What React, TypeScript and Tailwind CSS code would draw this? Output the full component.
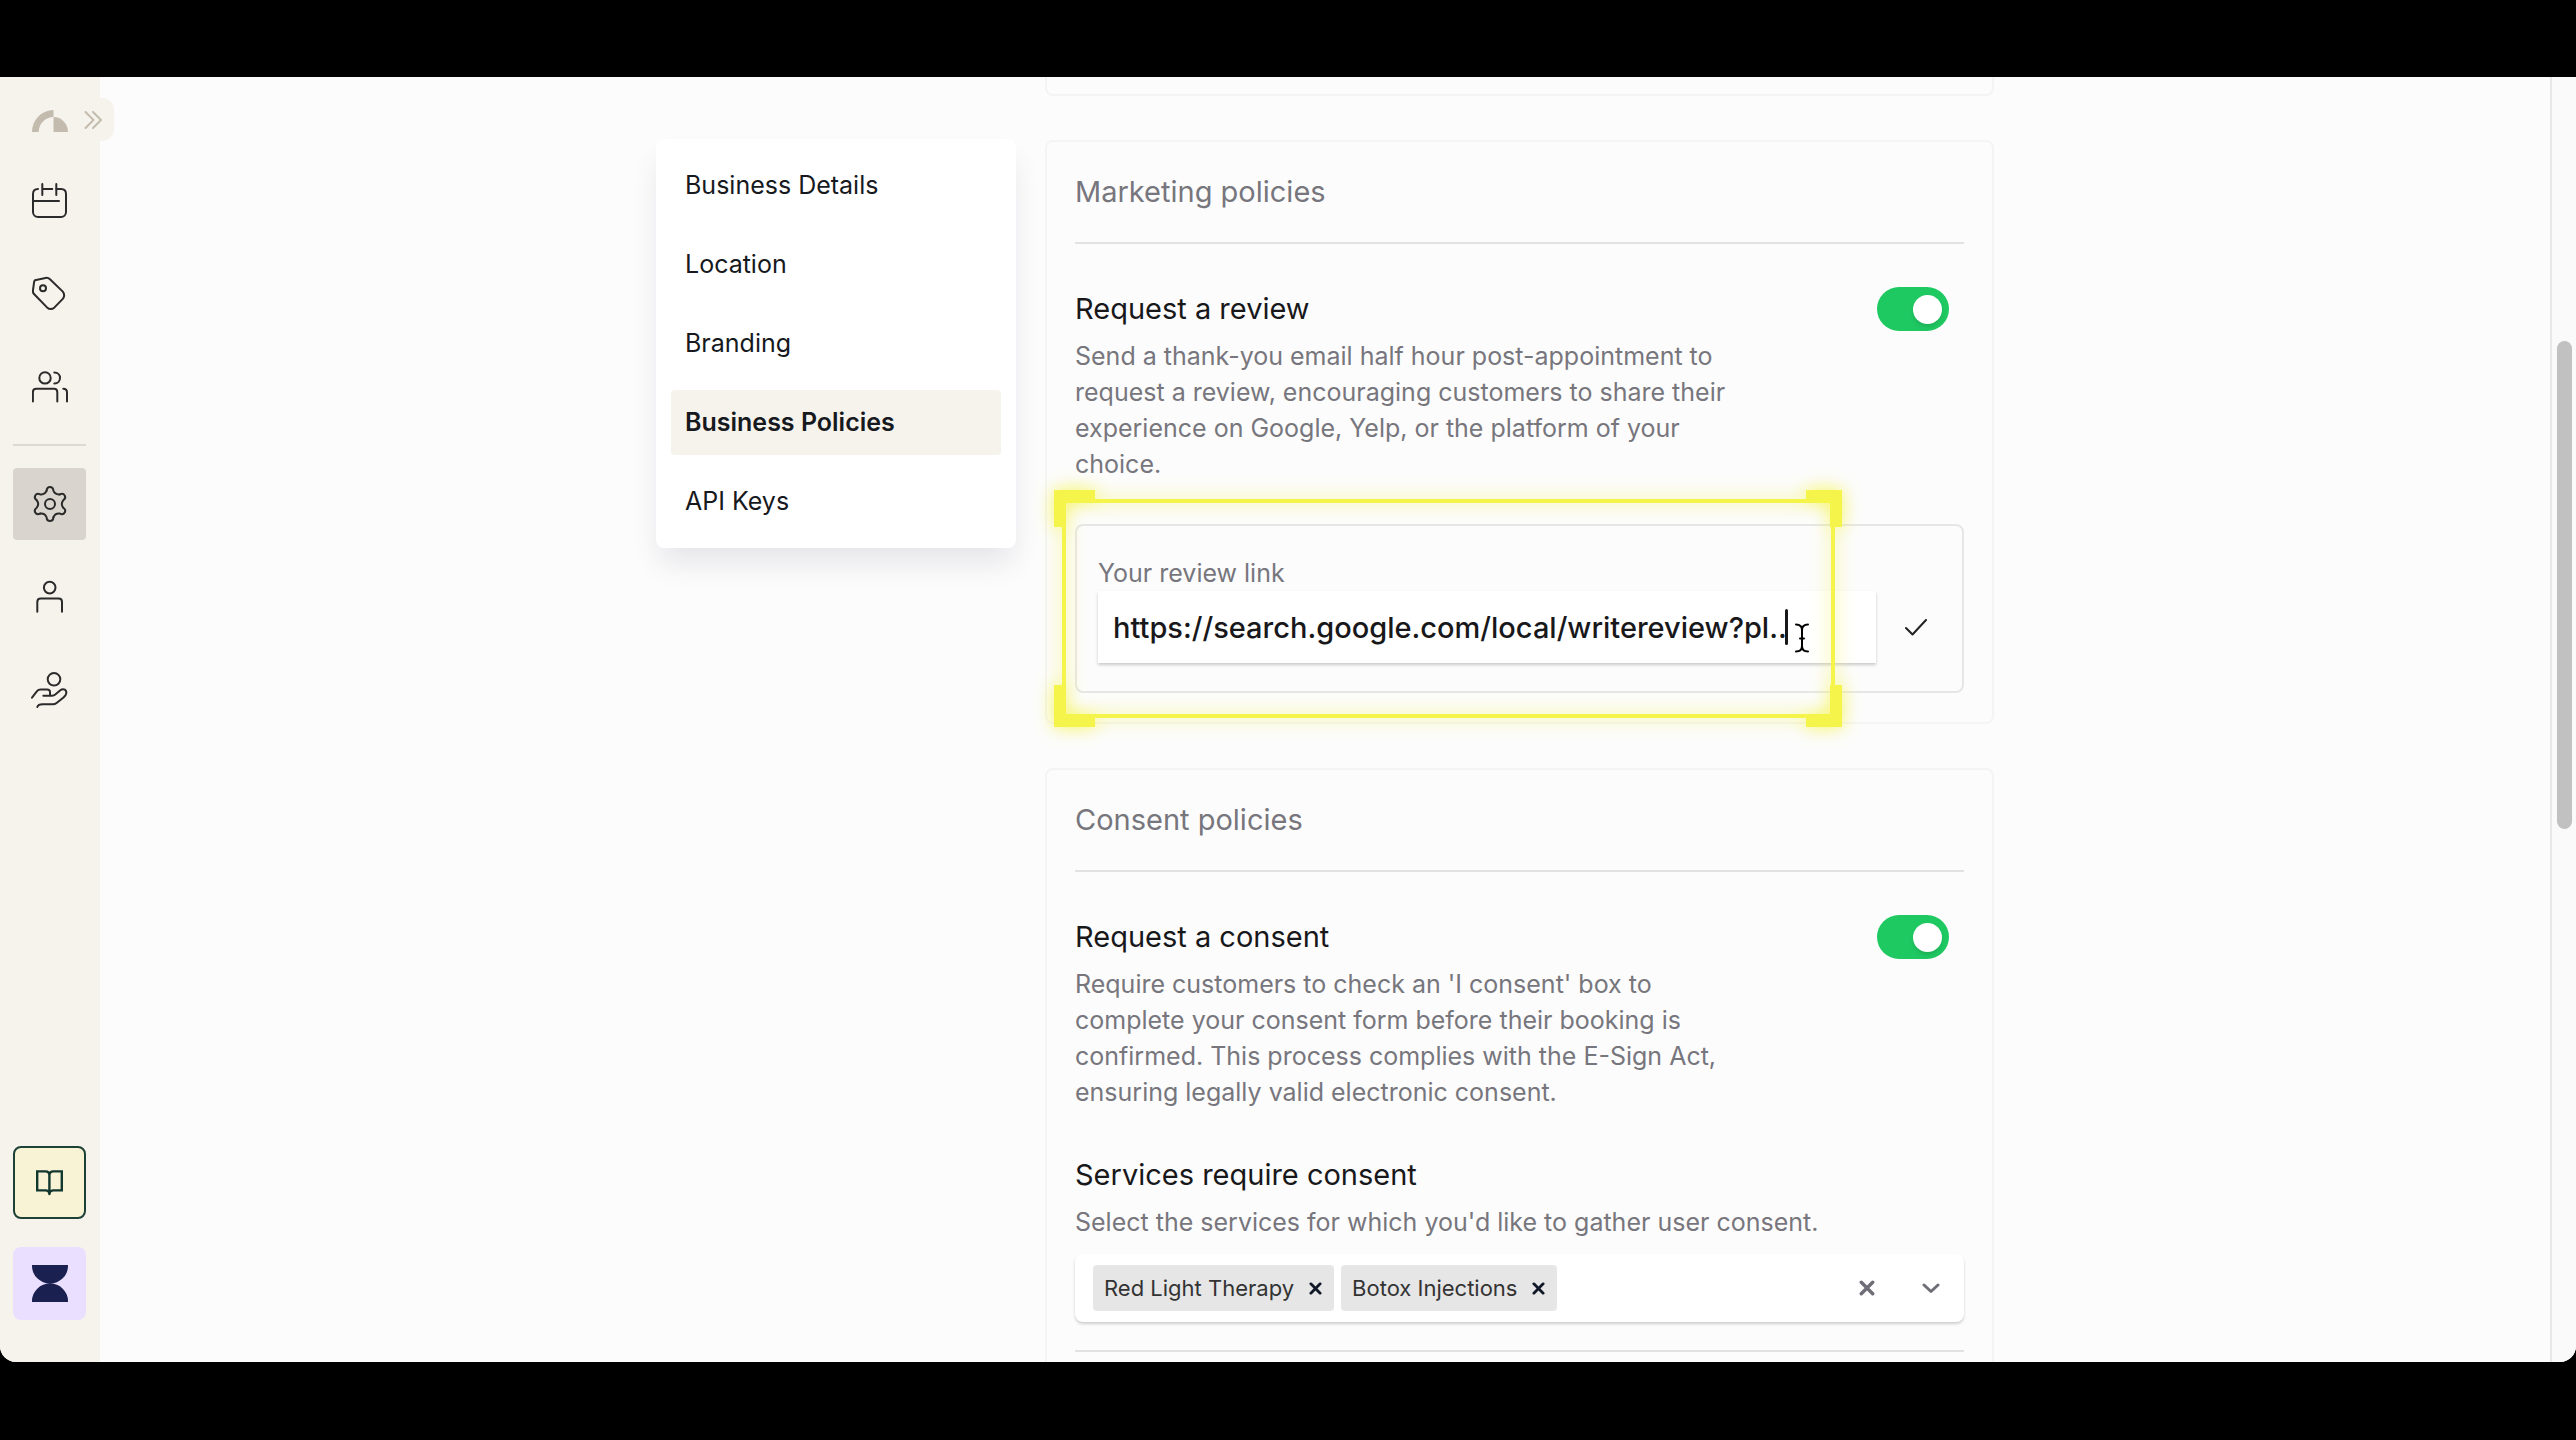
import React, { useState } from "react";
import clsx from "clsx";

const stroke = {
	fill: "none",
	stroke: "currentColor",
	strokeWidth: 2,
	strokeLinecap: "round" as const,
	strokeLinejoin: "round" as const,
}

const CalendarIcon = () => (
	<svg viewBox="0 0 36 36" className="size-9" {...stroke}>
		<path d="M6 6C3 6 1 8 1 11V29a5 5 0 0 0 5 5H29a5 5 0 0 0 5-5V11C34 8 32 6 29 6H24M10.3 1V12M10.3 6H20.3M24.3 1V12M1 18H27" />
	</svg>
)

const TagIcon = () => (
	<svg viewBox="0 0 36 36" className="size-9" {...stroke}>
		<path d="M2.9 4.2 13.5 1.9Q16.3 1.5 18 3.3L30.8 15.6Q33.4 19 31 22.6L22.5 31.4Q18.7 34.6 15 31.4L2 18Q.6 16.5 1 14L2.2 5.4Z" />
		<circle cx="11" cy="12.3" r="3" />
	</svg>
)

const UsersIcon = () => (
	<svg viewBox="0 0 36 32" className="h-8 w-9" {...stroke}>
		<circle cx="13" cy="6.9" r="5.7" />
		<path d="M22.3 1.5C26 1.5 28 4 28 6.9S26 12.5 22.3 12.5M.9 30.5V21.2Q.9 17.8 4.3 17.8H22Q25.3 17.8 25.3 21.2V30.5M31.3 17.8Q35 18 35 21.2V30.5" />
	</svg>
)

const GearIcon = () => (
	<svg viewBox="0 0 36 36" className="size-9" {...stroke}>
		{[0, 60, 120, 180, 240, 300].map(angle => (
			<path
				key={angle}
				d="M14.6 4.7C14.8 2.2 16 1 18 1C20 1 21.2 2.2 21.4 4.7Q23.2 9 27.8 8.4"
				transform={`rotate(${angle} 18 18)`}
			/>
		))}
		<circle cx="18" cy="18" r="5" />
	</svg>
)

const UserIcon = () => (
	<svg viewBox="0 0 36 34" className="h-[34px] w-9" {...stroke}>
		<circle cx="17.7" cy="7.6" r="5.8" />
		<path d="M5.3 31.7V22Q5.3 18.6 8.8 18.6H26.6Q30 18.6 30 22V31.7" />
	</svg>
)

const HandIcon = () => (
	<svg viewBox="0 0 38 36" className="h-9 w-[38px]" {...stroke}>
		<circle cx="23" cy="7.3" r="6.3" />
		<path d="M1 25.7 6 19.2Q7.4 17.4 9.6 17.4H16.2Q19 17.4 19 20V23.7M12.3 23.7H21Q23 23.7 24.3 22.6L29.3 18.3Q31.5 16.5 33.9 17.6 36.4 19.6 34.6 23 33.8 24.3 32.5 25.4L25.6 31Q24 32.3 21.7 32.3H11.5Q7.2 32.3 6.3 35" />
	</svg>
)

const BookIcon = () => (
	<svg viewBox="0 0 27 26" className="h-[26px] w-[27px]" {...stroke} strokeWidth={2.4} strokeLinejoin="miter">
		<path d="M13.4 5.3Q13.4 1.4 9.5 1.4H1.2V20.4H10Q13.4 20.6 13.4 24ZM13.4 5.3Q13.4 1.4 17.3 1.4H25.8V20.4H17Q13.4 20.6 13.4 24" />
	</svg>
)

const HourglassLogo = () => (
	<svg viewBox="0 0 36 37" className="h-[37px] w-9" fill="#1a2050">
		<path d="M0 0H36V1A18 17.5 0 0 1 0 1ZM0 37H36V36A18 17.5 0 0 0 0 36Z" />
	</svg>
)

const BrandLogo = () => (
	<svg viewBox="0 0 36 22" className="h-[22px] w-9" fill="#c3bbae">
		<path d="M0 22A21.5 22 0 0 1 21.5 0V7A15 15 0 0 0 6.7 22ZM21.5 7A14.5 15 0 0 1 36 22H21.5Z" />
	</svg>
)

const CrossIcon = ({ className }: { className: string }) => (
	<svg viewBox="0 0 14 14" className={className} {...stroke} strokeWidth={3}>
		<path d="M2 2 12 12M12 2 2 12" />
	</svg>
)

const menuItems = [
	{ label: "Calendar", icon: CalendarIcon },
	{ label: "Services", icon: TagIcon },
	{ label: "Customers", icon: UsersIcon },
]

const accountItems = [
	{ label: "Settings", icon: GearIcon, active: true },
	{ label: "Profile", icon: UserIcon },
	{ label: "Payments", icon: HandIcon },
]

const settingTabs = ["Business Details", "Location", "Branding", "Business Policies", "API Keys"]

function SidebarLink({ label, icon: Icon, active }: { label: string; icon: React.FC; active?: boolean }) {
	return (
		<a
			href="#"
			aria-label={label}
			className={clsx("flex h-[72px] items-center justify-center rounded text-[#2b2b2b]", active && "bg-[#d9d5ce]")}
		>
			<Icon />
		</a>
	)
}

function Sidebar() {
	return (
		<aside className="relative flex w-[100px] shrink-0 flex-col bg-[#f6f3ec] pr-[14px] pb-[42px] pl-[13px]">
			<div className="flex h-[88px] shrink-0 items-center justify-center">
				<BrandLogo />
			</div>
			<button
				aria-label="Expand menu"
				className="absolute top-[21px] left-[78px] flex h-[43px] w-9 items-center rounded-r-xl bg-[#f6f3ec] pl-[6px] text-[#c3bbae]"
			>
				<svg viewBox="0 0 18 18" className="size-[18px]" {...stroke}>
					<path d="M1.5 1 9.5 9 1.5 17M9 1 17 9 9 17" />
				</svg>
			</button>
			<nav className="flex flex-col gap-[21px]">
				{menuItems.map(item => <SidebarLink key={item.label} {...item} />)}
				<hr className="mb-px border-t-2 border-[#ddd9d1]" />
				{accountItems.map(item => <SidebarLink key={item.label} {...item} />)}
			</nav>
			<div className="mt-auto flex flex-col gap-7">
				<button aria-label="Guides" className="flex size-[73px] items-center justify-center rounded-lg border-2 border-[#1d4037] bg-[#f8f3d4] text-[#12372f]">
					<BookIcon />
				</button>
				<button aria-label="Workspace" className="flex size-[73px] items-center justify-center rounded-lg bg-[#ebdfff]">
					<HourglassLogo />
				</button>
			</div>
		</aside>
	)
}

function PolicyCard({ title, children }: { title: string; children: React.ReactNode }) {
	return (
		<section className="rounded-lg border-2 border-[#f4f4f4] px-7 pt-8 pb-[29px]">
			<h2 className="border-b-2 border-[#e2e2e2] pb-8 text-[29px] leading-9 text-[#77767d]">{title}</h2>
			{children}
		</section>
	)
}

function PolicySwitch({ id, title, text }: { id: string; title: string; text: string }) {
	const [enabled, setEnabled] = useState<boolean>(true)

	return (
		<div className="mt-[43px]">
			<div className="flex h-11 items-center justify-between pr-[15px]">
				<label htmlFor={id} className="text-[29px] leading-9 text-[#18181b]">{title}</label>
				<input
					id={id}
					type="checkbox"
					role="switch"
					checked={enabled}
					onChange={() => setEnabled(!enabled)}
					className="flex h-11 w-[72px] appearance-none items-center rounded-full bg-gray-300 px-[7px] before:size-[29px] before:rounded-full before:bg-white before:shadow-md before:content-[''] checked:justify-end checked:bg-[#1fc962]"
				/>
			</div>
			<p className="mt-[7px] max-w-[668px] text-[25px] leading-9 text-[#77767d]">{text}</p>
		</div>
	)
}

function HighlightFrame() {
	return (
		<div className="pointer-events-none absolute -top-[27px] -left-[15px] h-[219px] w-[773px] border-4 border-[#f5f44b] drop-shadow-[0_0_9px_#f5f44b]">
			<span className="absolute -top-[13px] -left-3 h-[37px] w-[41px] border-t-[13px] border-l-[12px] border-[#f5f44b]" />
			<span className="absolute -top-[13px] -right-[11px] h-[37px] w-9 border-t-[13px] border-r-[12px] border-[#f5f44b]" />
			<span className="absolute -bottom-[13px] -left-3 h-[42px] w-[41px] border-b-[13px] border-l-[12px] border-[#f5f44b]" />
			<span className="absolute -right-[11px] -bottom-[13px] h-[42px] w-9 border-r-[12px] border-b-[13px] border-[#f5f44b]" />
		</div>
	)
}

function ReviewLink() {
	const [link, setLink] = useState<string>("https://search.google.com/local/writereview?pl..")

	return (
		<div className="relative mt-[42px] rounded-lg border-2 border-[#e6e6e6] pt-[29px] pb-7 pl-[21px]">
			<label htmlFor="review-link" className="block text-[25px] leading-9 text-[#77767d]">Your review link</label>
			<div className="flex">
				<div className="relative flex-1">
					<input
						id="review-link"
						value={link}
						onChange={e => setLink(e.target.value)}
						className="h-[72px] w-full bg-white px-[15px] text-[29px] font-medium text-[#18181b] shadow-[0_2px_3px_rgba(0,0,0,0.2)] outline-none"
					/>
					{/* Text caret and mouse pointer */}
					<span className="absolute top-[18px] left-[687px] h-9 w-[3px] rounded-full bg-[#18181b]" />
					<svg viewBox="0 0 14 30" className="absolute top-8 left-[697px] h-[30px] w-3.5 text-black" {...stroke}>
						<path d="M1 1.5Q7 1.5 7 7 7 1.5 13 1.5M7 6V24M1 28.5Q7 28.5 7 23 7 28.5 13 28.5M5 15.5H9" />
					</svg>
				</div>
				<button aria-label="Save review link" className="mr-1.5 flex w-20 items-center justify-center text-[#222]">
					<svg viewBox="0 0 22 17" className="h-[17px] w-[22px]" {...stroke}>
						<path d="M1 9 7.5 15.5 21 1" />
					</svg>
				</button>
			</div>
			<HighlightFrame />
		</div>
	)
}

function ServiceSelect() {
	const [services, setServices] = useState<string[]>(["Red Light Therapy", "Botox Injections"])

	return (
		<div className="mt-3.5 flex h-[68px] items-center gap-[7px] rounded-lg bg-white pr-3.5 pl-[18px] shadow-[0_2px_3px_rgba(0,0,0,0.18)]">
			{services.map(service => (
				<span key={service} className="flex h-[46px] items-center rounded bg-[#e6e6e6] pl-[11px] text-[22px] text-[#333]">
					{service}
					<button
						aria-label={`Remove ${service}`}
						onClick={() => setServices(services.filter(s => s !== service))}
						className="flex h-full items-center pr-3 pl-[15px] text-[#111827]"
					>
						<CrossIcon className="size-[13px]" />
					</button>
				</span>
			))}
			<input id="services" aria-label="Services" className="h-full min-w-0 flex-1 outline-none" />
			<button aria-label="Clear services" onClick={() => setServices([])} className="px-3 text-[#6f6e77]">
				<CrossIcon className="size-4" />
			</button>
			<button aria-label="Show services" className="pr-2.5 pl-7 text-[#6f6e77]">
				<svg viewBox="0 0 18 11" className="h-[11px] w-[18px]" {...stroke} strokeWidth={3}>
					<path d="M2 2 9 8.5 16 2" />
				</svg>
			</button>
		</div>
	)
}

export default function BusinessPoliciesPage() {
	const [tab, setTab] = useState<string>("Business Policies")

	return (
		<div className="h-screen bg-black pt-[77px] pb-[78px] font-['Inter',sans-serif]">
			<div className="flex h-full overflow-hidden rounded-b-2xl bg-[#fcfcfc]">
				<Sidebar />

				<main className="min-w-0 flex-1 overflow-hidden">
					<div className="mx-auto flex max-w-[1338px] items-start gap-[29px]">
						<nav className="mt-[62px] flex w-[360px] shrink-0 flex-col gap-3.5 rounded-lg bg-white px-[15px] py-3.5 shadow-[0_18px_30px_-4px_rgba(20,20,60,0.10)]">
							{settingTabs.map(label => (
								<button
									key={label}
									onClick={() => setTab(label)}
									className={clsx(
										"h-[65px] rounded-sm px-3.5 text-left text-[25px] text-[#16191d]",
										tab === label && "bg-[#f6f3ec] font-semibold"
									)}
								>
									{label}
								</button>
							))}
						</nav>

						<div className="flex min-w-0 flex-1 flex-col gap-11">
							<section className="h-[19px] rounded-b-lg border-2 border-t-0 border-[#f4f4f4]" />

							<PolicyCard title="Marketing policies">
								<PolicySwitch
									id="request-review"
									title="Request a review"
									text="Send a thank-you email half hour post-appointment to request a review, encouraging customers to share their experience on Google, Yelp, or the platform of your choice."
								/>
								<ReviewLink />
							</PolicyCard>

							<PolicyCard title="Consent policies">
								<PolicySwitch
									id="request-consent"
									title="Request a consent"
									text="Require customers to check an 'I consent' box to complete your consent form before their booking is confirmed. This process complies with the E-Sign Act, ensuring legally valid electronic consent."
								/>
								<div className="mt-[43px]">
									<label htmlFor="services" className="flex h-11 items-center text-[29px] leading-9 text-[#18181b]">Services require consent</label>
									<p className="mt-[7px] text-[25px] leading-9 text-[#77767d]">Select the services for which you'd like to gather user consent.</p>
									<ServiceSelect />
								</div>
								<hr className="mt-7 mb-20 border-t-2 border-[#e2e2e2]" />
							</PolicyCard>
						</div>
					</div>
				</main>

				{/* Scroll track */}
				<div className="w-[26px] shrink-0 border-l-2 border-[#e8e8e8] bg-[#fafafa] pt-[264px] pl-[5px]">
					<div className="h-[488px] w-[15px] rounded-full bg-[#c1c1c1]" />
				</div>
			</div>
		</div>
	);
}
